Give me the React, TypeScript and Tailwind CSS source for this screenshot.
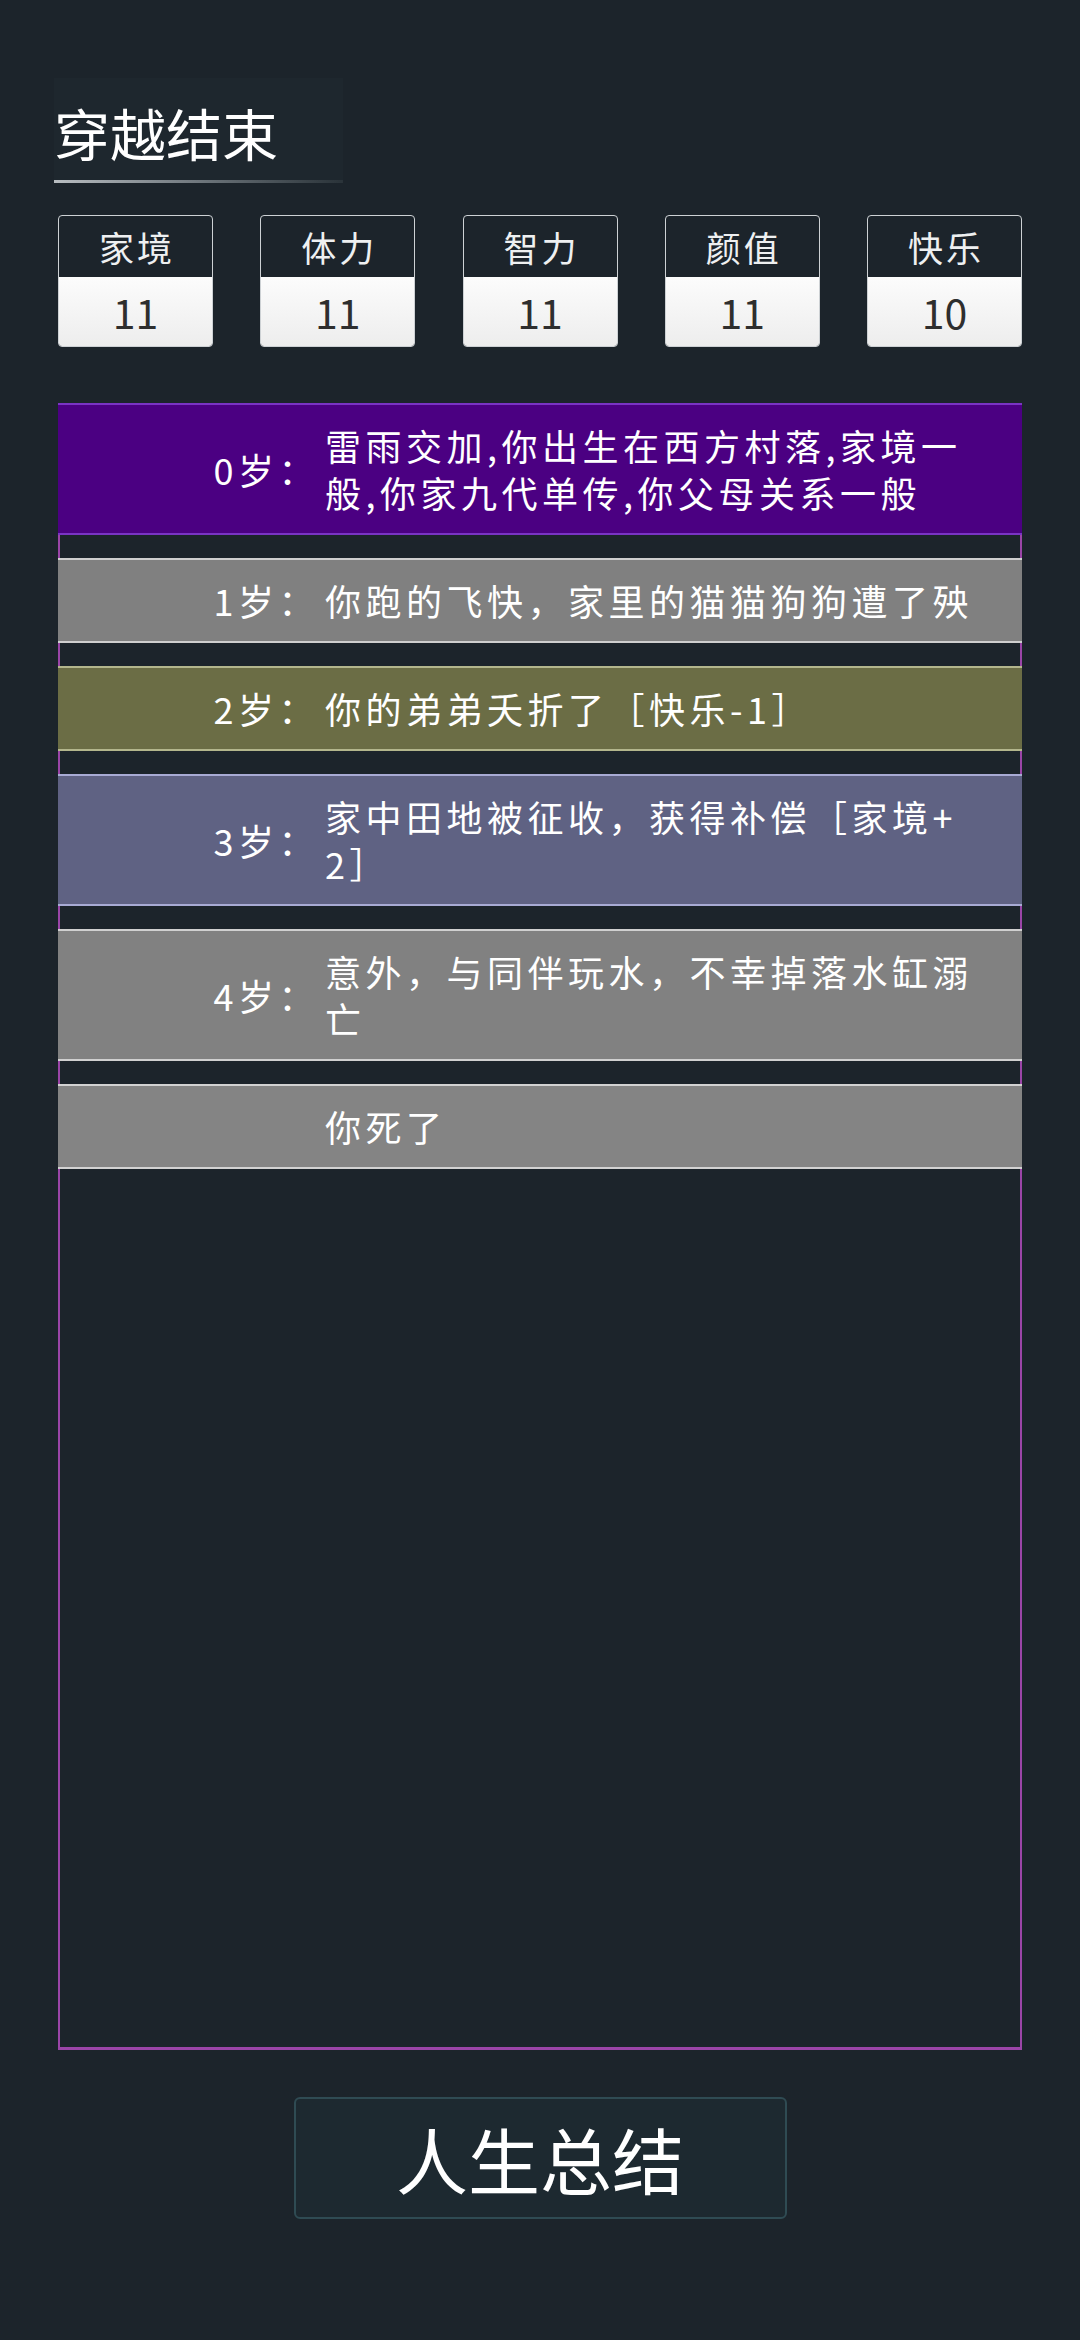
const STATS = [
  { label: "家境", value: 11 },
  { label: "体力", value: 11 },
  { label: "智力", value: 11 },
  { label: "颜值", value: 11 },
  { label: "快乐", value: 10 },
] as const;

type LogEntry = {
  age?: string;
  lines: string[];
  bg: string;
  edge: string;
};

const LOG: LogEntry[] = [
  {
    age: "0岁：",
    lines: ["雷雨交加,你出生在西方村落,家境一", "般,你家九代单传,你父母关系一般"],
    bg: "bg-[#4b0082]",
    edge: "border-[#7a34c4]",
  },
  {
    age: "1岁：",
    lines: ["你跑的飞快，家里的猫猫狗狗遭了殃"],
    bg: "bg-[#808080]",
    edge: "border-[#cfcfcf]",
  },
  {
    age: "2岁：",
    lines: ["你的弟弟夭折了［快乐-1］"],
    bg: "bg-[#6b6d45]",
    edge: "border-[#b3b68c]",
  },
  {
    age: "3岁：",
    lines: ["家中田地被征收，获得补偿［家境+", "2］"],
    bg: "bg-[#5f6283]",
    edge: "border-[#a8abd4]",
  },
  {
    age: "4岁：",
    lines: ["意外，与同伴玩水，不幸掉落水缸溺", "亡"],
    bg: "bg-[#818181]",
    edge: "border-[#d0d0d0]",
  },
  {
    lines: ["你死了"],
    bg: "bg-[#848484]",
    edge: "border-[#d2d2d2]",
  },
];

function StatCard({ label, value }: { label: string; value: number }) {
  return (
    <div className="flex h-[132px] w-[155px] flex-col overflow-hidden rounded-[4px] border border-[#cdd1d4]">
      <div className="flex h-[61px] items-center justify-center pl-[3px] text-[35px] leading-none tracking-[3px] text-[#eef0f1]">
        {label}
      </div>
      <div className="flex flex-1 items-center justify-center bg-linear-to-b from-[#fcfcfc] to-[#ededed] text-[41px] leading-none text-[#2e2e2e]">
        {value}
      </div>
    </div>
  );
}

function LogRow({ entry }: { entry: LogEntry }) {
  return (
    <div className={`flex items-center border-y-2 py-[17px] text-[36px] leading-[47px] tracking-[4.5px] text-white ${entry.bg} ${entry.edge}`}>
      <div className="w-[261px] shrink-0 text-right">{entry.age}</div>
      <div className="ml-[6px]">
        {entry.lines.map((line) => (
          <div key={line} className="whitespace-nowrap">
            {line}
          </div>
        ))}
      </div>
    </div>
  );
}

export default function App() {
  return (
    <div className="flex min-h-[2340px] flex-col bg-[#1c242b] px-[58px] pt-[78px] font-['Noto_Sans_CJK_SC','Noto_Sans',sans-serif]">
      {/* header */}
      <div className="-ml-[4px] w-[289px]">
        <div className="flex h-[102px] items-center bg-[#1e272e] pt-[6px] text-[56px] leading-none text-white">
          穿越结束
        </div>
        <div className="h-[3px] bg-linear-to-r from-[#b8bdc1] via-[#6f777d] to-[#2a3339]" />
      </div>

      <div className="mt-[32px] flex justify-between">
        {STATS.map((s) => (
          <StatCard key={s.label} label={s.label} value={s.value} />
        ))}
      </div>

      {/* life log */}
      <div className="mt-[56px] flex h-[1647px] flex-col">
        {LOG.map((entry, i) => (
          <div key={i} className="flex flex-col">
            <LogRow entry={entry} />
            {i < LOG.length - 1 && <div className="h-[23px] border-x-2 border-[#9b45a8]" />}
          </div>
        ))}
        <div className="flex-1 border-x-2 border-b-[3px] border-[#9b45a8]" />
      </div>

      <button className="mx-auto mt-[47px] flex h-[122px] w-[493px] items-center justify-center rounded-[6px] border-2 border-[#2f4b53] bg-[#1d2930] text-[72px] leading-none text-white">
        人生总结
      </button>
    </div>
  );
}
